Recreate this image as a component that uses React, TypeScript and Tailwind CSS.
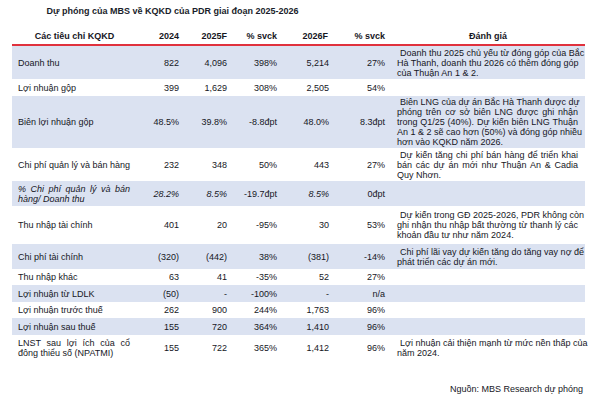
import React from 'react'

type Row = {
  label: string[]
  italic?: boolean
  vals: string[]
  note?: string[]
  h: string
  blue?: boolean
}

const rows: Row[] = [
  {
    label: ['Doanh thu'],
    vals: ['822', '4,096', '398%', '5,214', '27%'],
    note: [
      'Doanh thu 2025 chủ yếu từ đóng góp của Bắc',
      'Hà Thanh, doanh thu 2026 có thêm đóng góp',
      'của Thuận An 1 & 2.',
    ],
    h: 'h-[33px]',
    blue: true,
  },
  { label: ['Lợi nhuận gộp'], vals: ['399', '1,629', '308%', '2,505', '54%'], h: 'h-[17px]' },
  {
    label: ['Biên lợi nhuận gộp'],
    vals: ['48.5%', '39.8%', '-8.8đpt', '48.0%', '8.3đpt'],
    note: [
      'Biên LNG của dự án Bắc Hà Thanh được dự',
      'phóng trên cơ sở biên LNG được ghi nhận',
      'trong Q1/25 (40%). Dự kiến biên LNG Thuận',
      'An 1 & 2 sẽ cao hơn (50%) và đóng góp nhiều',
      'hơn vào KQKD năm 2026.',
    ],
    h: 'h-[52px]',
    blue: true,
  },
  {
    label: ['Chi phí quản lý và bán hàng'],
    vals: ['232', '348', '50%', '443', '27%'],
    note: [
      'Dự kiến tăng chi phí bán hàng để triển khai',
      'bán các dự án mới như Thuận An & Cadia',
      'Quy Nhơn.',
    ],
    h: 'h-[33px]',
  },
  {
    label: ['% Chi phí quản lý và bán', 'hàng/ Doanh thu'],
    italic: true,
    vals: ['28.2%', '8.5%', '-19.7đpt', '8.5%', '0đpt'],
    h: 'h-[25px]',
    blue: true,
  },
  {
    label: ['Thu nhập tài chính'],
    vals: ['401', '20', '-95%', '30', '53%'],
    note: [
      'Dự kiến trong GĐ 2025-2026, PDR không còn',
      'ghi nhận thu nhập bất thường từ thanh lý các',
      'khoản đầu tư như năm 2024.',
    ],
    h: 'h-[38px]',
  },
  {
    label: ['Chi phí tài chính'],
    vals: ['(320)', '(442)', '38%', '(381)', '-14%'],
    note: ['Chi phí lãi vay dự kiến tăng do tăng vay nợ để', 'phát triển các dự án mới.'],
    h: 'h-[25px]',
    blue: true,
  },
  { label: ['Thu nhập khác'], vals: ['63', '41', '-35%', '52', '27%'], h: 'h-[16px]' },
  { label: ['Lợi nhuận từ LDLK'], vals: ['(50)', '-', '-100%', '-', 'n/a'], h: 'h-[17px]', blue: true },
  { label: ['Lợi nhuận trước thuế'], vals: ['262', '900', '244%', '1,763', '96%'], h: 'h-[16px]' },
  { label: ['Lợi nhuận sau thuế'], vals: ['155', '720', '364%', '1,410', '96%'], h: 'h-[17px]', blue: true },
  {
    label: ['LNST sau lợi ích của cổ', 'đông thiểu số (NPATMI)'],
    vals: ['155', '722', '365%', '1,412', '96%'],
    note: ['Lợi nhuận cải thiện mạnh từ mức nền thấp của', 'năm 2024.'],
    h: 'h-[25px]',
  },
]

const cols = 'grid grid-cols-[123px_48px_48px_50px_52px_56px_196px]'

function Lines({ lines, first = '' }: { lines: string[]; first?: string }) {
  return (
    <div className="flex flex-col">
      {lines.map((l, i) => (
        <div
          key={i}
          className={
            i < lines.length - 1
              ? 'text-justify [text-align-last:justify] whitespace-nowrap ' + (i === 0 ? first : '')
              : 'whitespace-nowrap ' + (i === 0 ? first : '')
          }
        >
          {l}
        </div>
      ))}
    </div>
  )
}

export default function App() {
  return (
    <div className="w-[602px] h-[411px] bg-white text-[9px] leading-[10px] text-[#16161e] font-['Liberation_Sans',Arial,sans-serif]">
      <div className="pt-[5px] ml-[12px] w-[321px] text-center font-bold leading-[12px] text-[#1a1d2b]">
        Dự phóng của MBS về KQKD của PDR giai đoạn 2025-2026
      </div>

      <div className="mx-[12px] mt-[10px] w-[573px]">
        <div className={cols + ' h-[19px] items-center font-bold border-b-2 border-[#e0313d]'}>
          <div className="text-center pl-[2px]">Các tiêu chỉ KQKD</div>
          <div className="text-right pr-[4px]">2024</div>
          <div className="text-right pr-[4px]">2025F</div>
          <div className="text-right pr-[4px]">% svck</div>
          <div className="text-right pr-[5px]">2026F</div>
          <div className="text-right pr-[4px]">% svck</div>
          <div className="text-center pl-[2px]">Đánh giá</div>
        </div>

        {rows.map((r, idx) => (
          <div key={idx} className={cols + ' items-center ' + r.h + (r.blue ? ' bg-[#dbe2f1]' : '')}>
            <div className={'pl-[6px] pr-[5px] ' + (r.italic ? 'italic' : '')}>
              <Lines lines={r.label} />
            </div>
            {r.vals.map((v, i) => (
              <div
                key={i}
                className={
                  'text-right ' +
                  (i === 3 ? 'pr-[4px] ' : 'pr-[4px] ') +
                  (r.italic && (i === 0 || i === 1 || i === 3) ? 'italic' : '')
                }
              >
                {v}
              </div>
            ))}
            <div className="pl-[8px] pr-[7px]">
              {r.note ? <Lines lines={r.note} first="pl-[3px]" /> : null}
            </div>
          </div>
        ))}
      </div>

      <div className="mt-[23px] pr-[19px] text-right leading-[12px]">Nguồn: MBS Research dự phóng</div>
    </div>
  )
}
